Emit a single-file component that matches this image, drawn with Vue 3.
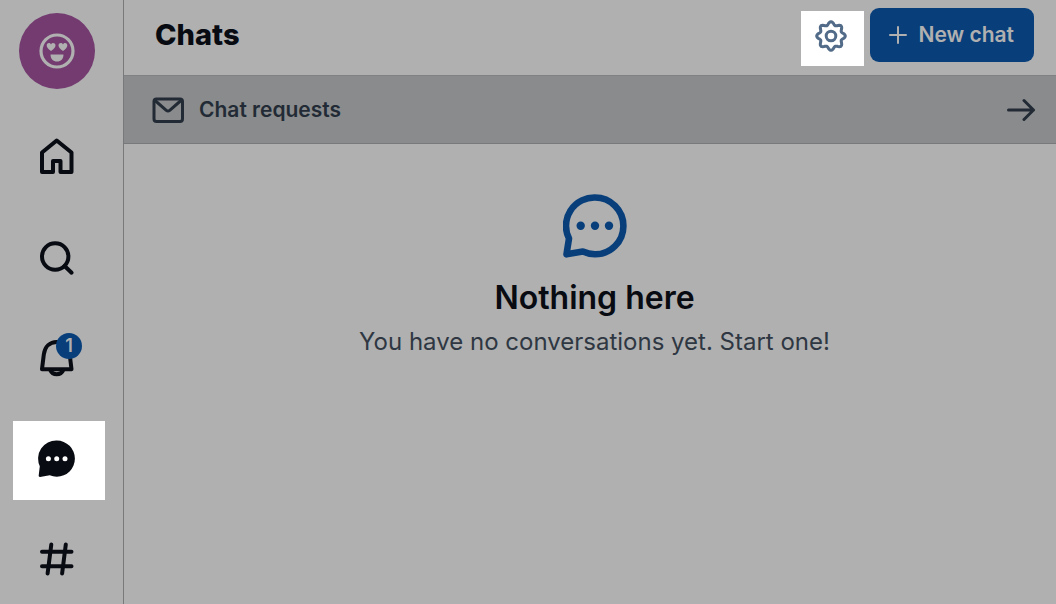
<script setup>
const gear = Array.from({ length: 96 }, (_, i) => {
  const angle = (i / 96) * Math.PI * 2
  const radius = 12.7 + 1.6 * Math.cos(angle * 8)
  const x = 16 + radius * Math.cos(angle)
  const y = 16 + radius * Math.sin(angle)
  return `${x.toFixed(2)} ${y.toFixed(2)}`
})
const gearPath = `M${gear.join('L')}Z`
const unread = 1
</script>

<template>
  <div class="app">
    <aside class="sidebar">
      <button class="avatar" aria-label="Profile">
        <svg width="36" height="36" viewBox="0 0 36 36" fill="none" aria-hidden="true">
          <circle cx="18" cy="18" r="16" stroke="currentColor" stroke-width="3.2" />
          <path d="M12 18c-3-2-4.500-4-4.300-6 .3-2.100 3-2.800 4.300-.6 1.300-2.200 4.200-1.500 4.500.6.2 2-1.500 4-4.500 6Z" fill="currentColor" />
          <path d="M24 18c-3-2-4.700-4-4.500-6 .3-2.100 3.200-2.800 4.500-.6 1.300-2.200 4-1.500 4.300.6.2 2-1.300 4-4.300 6Z" fill="currentColor" />
          <path d="M11.500 21.500h13c0 4.400-2.700 7-6.500 7s-6.500-2.600-6.500-7Z" fill="currentColor" />
        </svg>
      </button>
      <nav class="nav" aria-label="Main">
        <a href="#home" class="item" aria-label="Home">
          <svg class="icon" viewBox="0 0 44 43" aria-hidden="true">
            <path d="M7 18.500 21.700 6.500 36.500 18.500V38h-11V27H18v11H7Z" />
          </svg>
        </a>
        <a href="#search" class="item" aria-label="Search">
          <svg class="icon" viewBox="0 0 44 43" aria-hidden="true">
            <circle cx="20.200" cy="21.500" r="13.200" />
            <path d="m29.600 31 7 6.700" />
          </svg>
        </a>
        <a href="#notifications" class="item" aria-label="Notifications">
          <svg class="icon" viewBox="0 0 44 43" aria-hidden="true">
            <path d="M7 33.300 8.800 18.500C9.900 10.500 15 6 21.700 6s12 4.500 13 12.500l1.800 14.800Z" />
            <path d="M15.500 34.500c2 5 10.500 5 12.500 0" />
          </svg>
          <span class="badge">{{ unread }}</span>
        </a>
        <a href="#chats" class="item active" aria-label="Chats" aria-current="page">
          <svg class="icon" viewBox="0 0 44 43" aria-hidden="true">
            <path class="solid" d="M21.800 3.500a18.100 18.100 0 1 1 0 36.200c-2.500 0-4.900-.5-7-1.400L5 39.900c-.8.1-1.400-.5-1.300-1.300l1.100-9.400a18.100 18.100 0 0 1 17-25.700Z" />
            <circle class="dot" cx="13.400" cy="21.700" r="2.500" />
            <circle class="dot" cx="21.700" cy="21.700" r="2.500" />
            <circle class="dot" cx="30" cy="21.700" r="2.500" />
          </svg>
        </a>
        <a href="#feeds" class="item" aria-label="Feeds">
          <svg class="icon" viewBox="0 0 44 43" aria-hidden="true">
            <path d="M7 13.700h29.500M7 28.300h29.500M16.300 6.500l-3.700 29M30.800 6.500l-3.700 29" />
          </svg>
        </a>
      </nav>
    </aside>
    <main class="main">
      <header class="header">
        <h1>Chats</h1>
        <button class="settings" aria-label="Chat settings">
          <svg width="32" height="32" viewBox="0 0 32 32" fill="none" stroke="currentColor" stroke-width="3" stroke-linejoin="round" aria-hidden="true">
            <path :d="gearPath" />
            <circle cx="16" cy="16" r="4.800" />
          </svg>
        </button>
        <button class="new-chat">
          <svg width="18" height="18" viewBox="0 0 18 18" fill="none" stroke="currentColor" stroke-width="2" stroke-linecap="round" aria-hidden="true">
            <path d="M9 1v16M1 9h16" />
          </svg>
          <span>New chat</span>
        </button>
      </header>
      <a href="#requests" class="requests">
        <svg width="32" height="26" viewBox="0 0 32 26" fill="none" stroke="currentColor" stroke-width="3" stroke-linejoin="round" aria-hidden="true">
          <rect x="2" y="2" width="28.500" height="22.500" rx="2.500" />
          <path d="m3 3.500 11.300 9.800a2.600 2.600 0 0 0 3.400 0L29 3.500" />
        </svg>
        <span>Chat requests</span>
        <svg class="arrow" width="30" height="26" viewBox="0 0 30 26" fill="none" stroke="currentColor" stroke-width="3" stroke-linecap="round" stroke-linejoin="round" aria-hidden="true">
          <path d="M2.500 13h25M18 3.500l9.500 9.500-9.500 9.500" />
        </svg>
      </a>
      <section class="empty">
        <svg width="64" height="64" viewBox="0 0 64 64" fill="none" aria-hidden="true">
          <path d="M32 3.500a28.400 28.400 0 1 1 0 56.800c-4.500 0-8.500-1-12.200-2.700L3.500 60.300 6 44.600A28.400 28.400 0 0 1 32 3.500Z" stroke="currentColor" stroke-width="6.600" stroke-linejoin="round" />
          <g fill="currentColor">
            <circle cx="17.700" cy="31.800" r="4.200" />
            <circle cx="32" cy="31.800" r="4.200" />
            <circle cx="46" cy="31.800" r="4.200" />
          </g>
        </svg>
        <h2>Nothing here</h2>
        <p>You have no conversations yet. Start one!</p>
      </section>
    </main>
  </div>
</template>

<style>
body {
  background: #b0b0b0;
}
</style>

<style scoped>
.app {
  display: flex;
  min-height: 100vh;
  box-sizing: border-box;
  font-family: Inter, "Liberation Sans", sans-serif;
  color: #080b12;
  background: #b0b0b0;
}
button {
  border: 0;
  padding: 0;
  font: inherit;
  cursor: pointer;
}
a {
  color: inherit;
  text-decoration: none;
}
.sidebar {
  flex: none;
  width: 123px;
  border-right: 1px solid #78797b;
  padding-top: 13px;
  display: flex;
  flex-direction: column;
}
.avatar {
  width: 76px;
  height: 76px;
  margin-left: 19px;
  border-radius: 50%;
  background: #733b70;
  color: #b0b0b0;
  display: grid;
  place-items: center;
}
.nav {
  display: flex;
  flex-direction: column;
  gap: 22px;
  margin: 29px 0 0 13px;
}
.item {
  position: relative;
  box-sizing: border-box;
  width: 92px;
  height: 79px;
  padding: 0 4px 4px 0;
  display: grid;
  place-items: center;
}
.active {
  background: #ffffff;
}
.icon {
  width: 44px;
  height: 43px;
  fill: none;
  stroke: currentColor;
  stroke-width: 4;
  stroke-linecap: round;
  stroke-linejoin: round;
}
.solid {
  fill: currentColor;
  stroke: none;
}
.dot {
  fill: #ffffff;
  stroke: none;
}
.badge {
  position: absolute;
  left: 43px;
  top: 13px;
  width: 26px;
  height: 26px;
  border-radius: 50%;
  background: #083f7b;
  color: #b0b0b0;
  font-size: 18px;
  line-height: 26px;
  font-weight: 600;
  text-align: center;
}
.main {
  flex: 1;
  min-width: 0;
}
.header {
  display: flex;
  align-items: center;
  box-sizing: border-box;
  height: 76px;
  padding: 0 22px 6px 31px;
  border-bottom: 1px solid #808182;
}
h1 {
  flex: 1;
  margin: 0;
  font-size: 29px;
  line-height: 40px;
  font-weight: 800;
}
.settings {
  width: 63px;
  height: 55px;
  margin: 8px 6px 0 0;
  padding: 0 4px 6px 0;
  display: grid;
  place-items: center;
  background: #ffffff;
  color: #526b88;
}
.new-chat {
  display: flex;
  align-items: center;
  gap: 11px;
  height: 54px;
  padding: 0 20px 0 19px;
  border-radius: 9px;
  background: #083f7b;
  color: #b0b0b0;
  font-size: 21px;
  font-weight: 600;
}
.requests {
  display: flex;
  align-items: center;
  box-sizing: border-box;
  height: 68px;
  gap: 15px;
  padding: 0 20px 0 28px;
  border-bottom: 1px solid #78797b;
  background: #8a8b8c;
  color: #222b35;
  font-size: 21px;
  font-weight: 600;
}
.arrow {
  margin-left: auto;
}
.empty {
  display: flex;
  flex-direction: column;
  align-items: center;
  padding: 50px 0 0 9px;
  text-align: center;
}
.empty svg {
  color: #083f7b;
}
h2 {
  margin: 20px 0 0;
  font-size: 32px;
  line-height: 40px;
  font-weight: 600;
}
p {
  margin: 8px 0 0;
  font-size: 24px;
  line-height: 32px;
  color: #2e3742;
}
</style>
